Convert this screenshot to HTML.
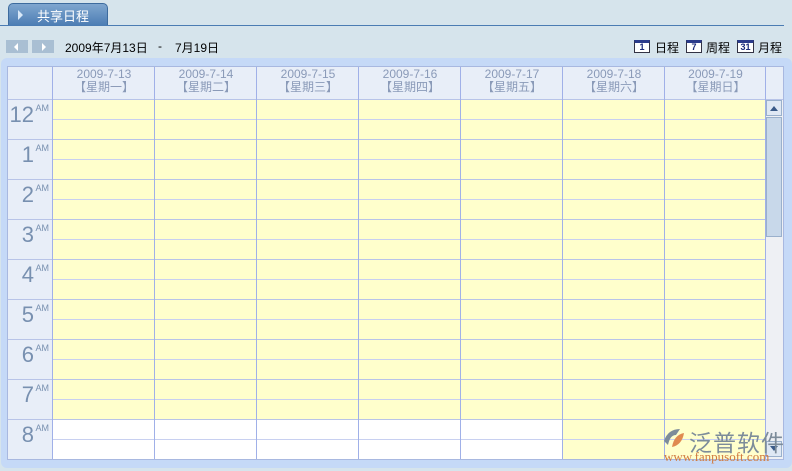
<!DOCTYPE html><html><head><meta charset="utf-8"><style>
*{margin:0;padding:0;box-sizing:border-box}
body{width:792px;height:471px;background:#d6e4ec;font-family:"Liberation Sans","Noto Sans CJK SC",sans-serif;position:relative;overflow:hidden;font-size:12px}
.abs{position:absolute}
</style></head><body>
<div class="abs" style="left:8px;top:3px;width:100px;height:23px;background:linear-gradient(#7fa6cf,#4b7cb3);border:1px solid #3d6b9e;border-bottom:none;border-radius:5px 5px 0 0"></div>
<div class="abs" style="left:18px;top:10px;width:0;height:0;border-left:5px solid #d8e8f8;border-top:5px solid transparent;border-bottom:5px solid transparent"></div>
<div class="abs" style="left:37px;top:6px;color:#fff;font-size:13px">共享日程</div>
<div class="abs" style="left:0;top:25px;width:784px;height:1px;background:#4b7cb3"></div>
<div class="abs" style="left:6px;top:40px;width:22px;height:13px;background:#a9bfd3"></div>
<div class="abs" style="left:32px;top:40px;width:22px;height:13px;background:#a9bfd3"></div>
<div class="abs" style="left:14px;top:43px;border-right:4px solid #fff;border-top:4px solid transparent;border-bottom:4px solid transparent"></div>
<div class="abs" style="left:42px;top:43px;border-left:4px solid #fff;border-top:4px solid transparent;border-bottom:4px solid transparent"></div>
<div class="abs" style="left:65px;top:39px;color:#000">2009年7月13日</div>
<div class="abs" style="left:158px;top:39px;color:#000">-</div>
<div class="abs" style="left:175px;top:39px;color:#000">7月19日</div>
<div class="abs" style="left:634px;top:40px;width:16px;height:13px;background:#fff;border:1px solid #334;border-top:3px solid #2b3b8b;font-size:9px;font-weight:bold;color:#1a2a7a;text-align:center;line-height:9px">1</div>
<div class="abs" style="left:655px;top:39px">日程</div>
<div class="abs" style="left:686px;top:40px;width:16px;height:13px;background:#fff;border:1px solid #334;border-top:3px solid #2b3b8b;font-size:9px;font-weight:bold;color:#1a2a7a;text-align:center;line-height:9px">7</div>
<div class="abs" style="left:706px;top:39px">周程</div>
<div class="abs" style="left:737px;top:40px;width:17px;height:13px;background:#fff;border:1px solid #334;border-top:3px solid #2b3b8b;font-size:9px;font-weight:bold;color:#1a2a7a;text-align:center;line-height:9px">31</div>
<div class="abs" style="left:758px;top:39px">月程</div>
<div class="abs" style="left:1px;top:58px;width:791px;height:410px;background:#c5d9f7;border-radius:6px"></div>
<div class="abs" style="left:7px;top:66px;width:777px;height:394px;background:#e8eef8;border:1px solid #a8b8e0"></div>
<svg class="abs" style="left:0;top:0" width="792" height="471">
<rect x="53" y="100" width="712" height="359" fill="#ffffcc"/>
<rect x="53" y="420" width="509" height="39" fill="#fff"/>
<g stroke="#c8d0f0" stroke-width="1">
<line x1="53" y1="119.5" x2="765" y2="119.5"/><line x1="53" y1="159.5" x2="765" y2="159.5"/><line x1="53" y1="199.5" x2="765" y2="199.5"/><line x1="53" y1="239.5" x2="765" y2="239.5"/><line x1="53" y1="279.5" x2="765" y2="279.5"/><line x1="53" y1="319.5" x2="765" y2="319.5"/><line x1="53" y1="359.5" x2="765" y2="359.5"/><line x1="53" y1="399.5" x2="765" y2="399.5"/><line x1="53" y1="439.5" x2="765" y2="439.5"/>
</g>
<g stroke="#b8c4e8" stroke-width="1">
<line x1="8" y1="139.5" x2="765" y2="139.5"/><line x1="8" y1="179.5" x2="765" y2="179.5"/><line x1="8" y1="219.5" x2="765" y2="219.5"/><line x1="8" y1="259.5" x2="765" y2="259.5"/><line x1="8" y1="299.5" x2="765" y2="299.5"/><line x1="8" y1="339.5" x2="765" y2="339.5"/><line x1="8" y1="379.5" x2="765" y2="379.5"/><line x1="8" y1="419.5" x2="765" y2="419.5"/>
<line x1="8" y1="99.5" x2="783" y2="99.5"/>
</g>
<g stroke="#a0b0e8" stroke-width="1">
<line x1="52.5" y1="67" x2="52.5" y2="459"/><line x1="154.5" y1="67" x2="154.5" y2="459"/><line x1="256.5" y1="67" x2="256.5" y2="459"/><line x1="358.5" y1="67" x2="358.5" y2="459"/><line x1="460.5" y1="67" x2="460.5" y2="459"/><line x1="562.5" y1="67" x2="562.5" y2="459"/><line x1="664.5" y1="67" x2="664.5" y2="459"/><line x1="765.5" y1="67" x2="765.5" y2="459"/>
</g>
<rect x="766" y="100" width="17" height="359" fill="#eef0f4"/>
<rect x="766.5" y="100.5" width="15" height="15" fill="#dfe8f4" stroke="#9ab0cc"/>
<path d="M770 111 L774 106 L778 111Z" fill="#3a5a88"/>
<rect x="766.5" y="117.5" width="15" height="119" fill="#c8d8ea" stroke="#9ab0cc"/>
<rect x="766.5" y="441.5" width="15" height="15" fill="#dfe8f4" stroke="#9ab0cc"/>
<path d="M770 446 L774 451 L778 446Z" fill="#3a5a88"/>
</svg>
<div class="abs" style="left:53px;top:68px;width:713px;display:flex;color:#8a9ab8;font-size:12px;text-align:center;line-height:13px">
<div style="width:102px">2009-7-13<br>【星期一】</div><div style="width:102px">2009-7-14<br>【星期二】</div><div style="width:102px">2009-7-15<br>【星期三】</div><div style="width:102px">2009-7-16<br>【星期四】</div><div style="width:102px">2009-7-17<br>【星期五】</div><div style="width:102px">2009-7-18<br>【星期六】</div><div style="width:101px">2009-7-19<br>【星期日】</div>
</div>
<div class="abs" style="left:8px;top:100px;width:44px;color:#7890b0">
<div style="height:40px;position:relative"><span style="position:absolute;right:18px;top:2px;font-size:22px">12</span><span style="position:absolute;right:3px;top:3px;font-size:9px">AM</span></div>
<div style="height:40px;position:relative"><span style="position:absolute;right:18px;top:2px;font-size:22px">1</span><span style="position:absolute;right:3px;top:3px;font-size:9px">AM</span></div>
<div style="height:40px;position:relative"><span style="position:absolute;right:18px;top:2px;font-size:22px">2</span><span style="position:absolute;right:3px;top:3px;font-size:9px">AM</span></div>
<div style="height:40px;position:relative"><span style="position:absolute;right:18px;top:2px;font-size:22px">3</span><span style="position:absolute;right:3px;top:3px;font-size:9px">AM</span></div>
<div style="height:40px;position:relative"><span style="position:absolute;right:18px;top:2px;font-size:22px">4</span><span style="position:absolute;right:3px;top:3px;font-size:9px">AM</span></div>
<div style="height:40px;position:relative"><span style="position:absolute;right:18px;top:2px;font-size:22px">5</span><span style="position:absolute;right:3px;top:3px;font-size:9px">AM</span></div>
<div style="height:40px;position:relative"><span style="position:absolute;right:18px;top:2px;font-size:22px">6</span><span style="position:absolute;right:3px;top:3px;font-size:9px">AM</span></div>
<div style="height:40px;position:relative"><span style="position:absolute;right:18px;top:2px;font-size:22px">7</span><span style="position:absolute;right:3px;top:3px;font-size:9px">AM</span></div>
<div style="height:40px;position:relative"><span style="position:absolute;right:18px;top:2px;font-size:22px">8</span><span style="position:absolute;right:3px;top:3px;font-size:9px">AM</span></div>
</div>
<svg class="abs" style="left:662px;top:427px" width="26" height="22"><path d="M2 14 Q6 2 18 2 L14 8 Q8 8 6 18Z" fill="#7d8c9a"/><path d="M10 20 Q12 8 22 6 Q20 18 10 20Z" fill="#e08a50"/></svg>
<div class="abs" style="left:689px;top:424px;font-size:23px;color:#7d8c9a;letter-spacing:1px">泛普软件</div>
<div class="abs" style="left:664px;top:449px;font-size:13px;color:#d07a40;font-family:'Liberation Serif',serif">www.fanpusoft.com</div>
</body></html>
